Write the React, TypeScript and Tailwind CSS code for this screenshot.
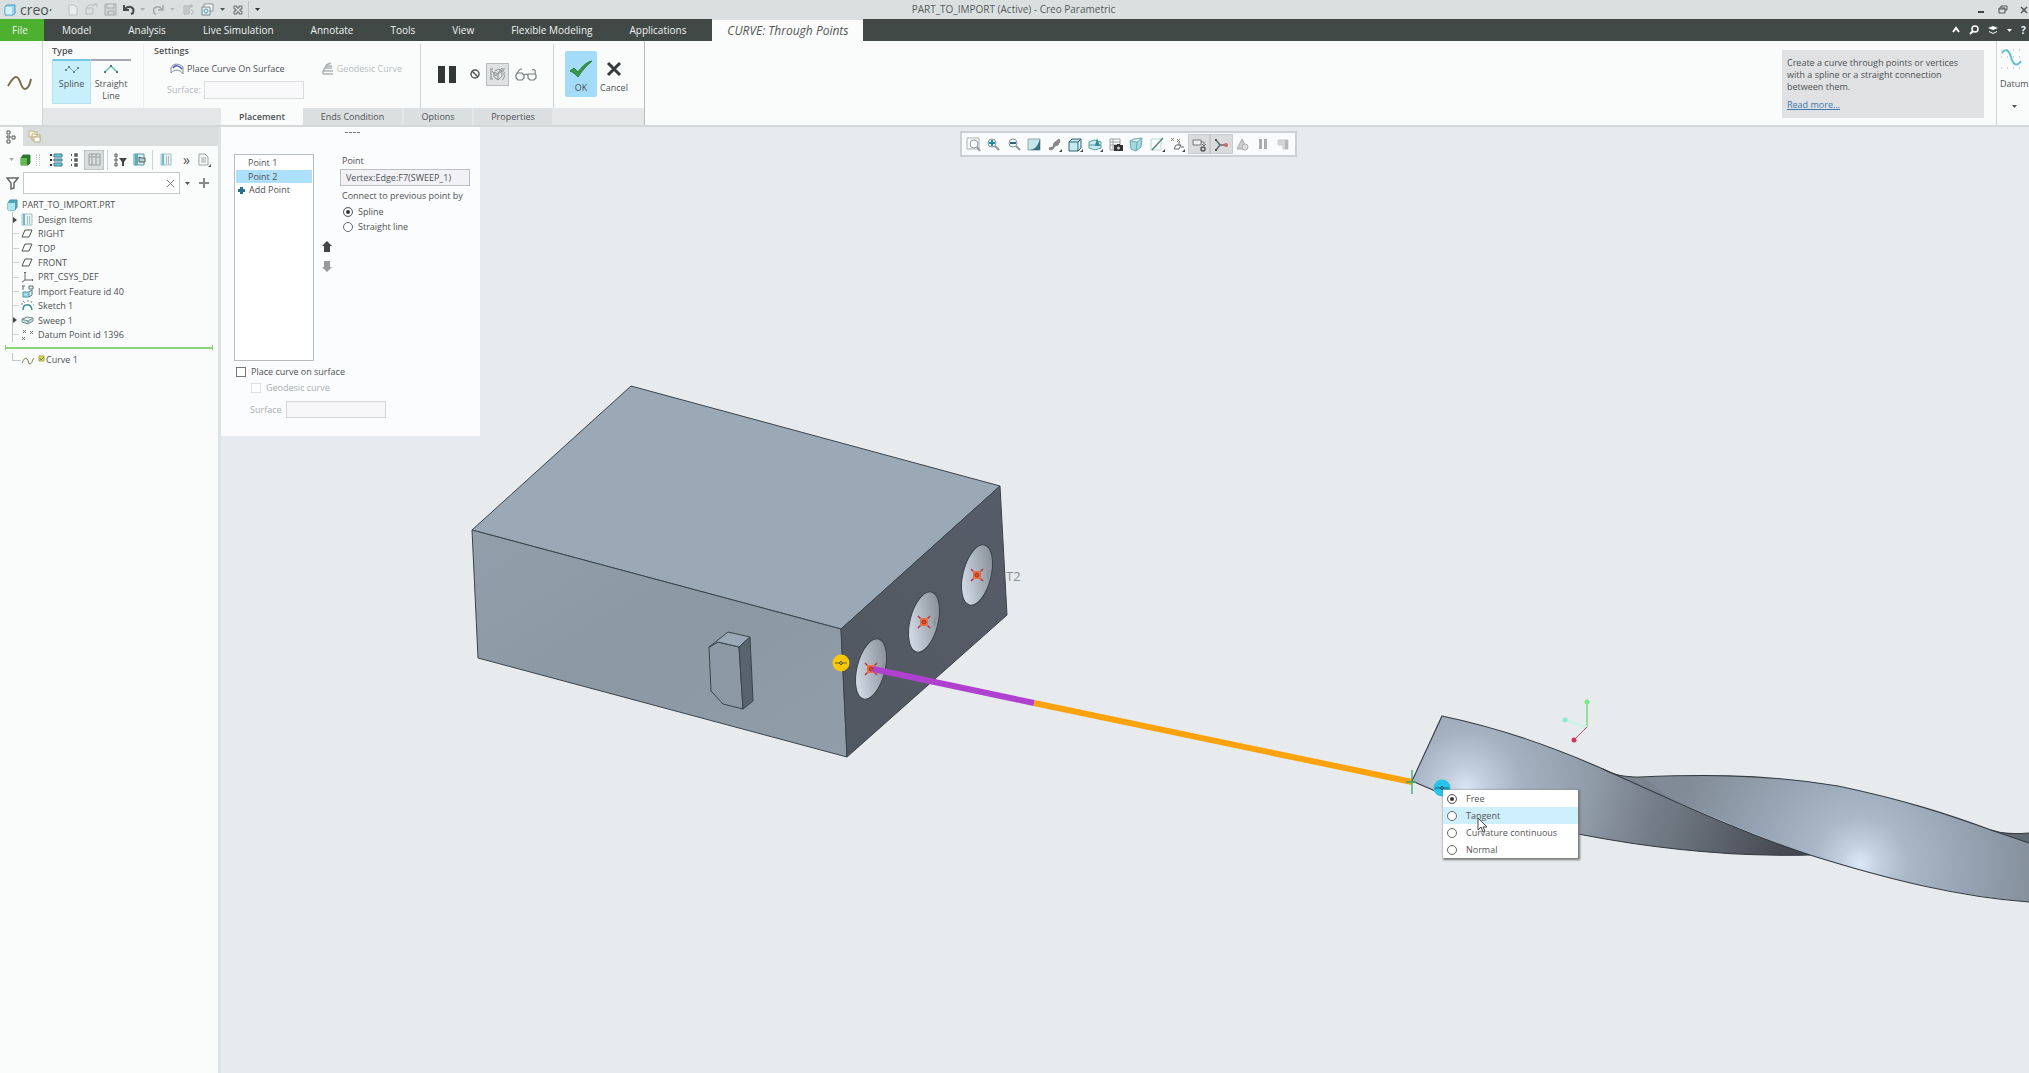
import React from "react";
import type { ReactNode } from "react";

type IconProps = { w?: number; h?: number; box?: string; children: ReactNode };

function Icon({ w = 14, h = 14, box, children }: IconProps) {
  return (
    <svg width={w} height={h} viewBox={box ?? `0 0 ${w} ${h}`} fill="none" stroke="#555" strokeWidth="1" className="shrink-0" aria-hidden="true">
      {children}
    </svg>
  );
}

function Caret({ color = "#555" }: { color?: string }) {
  return (
    <svg width="5" height="3" viewBox="0 0 5 3" className="shrink-0" aria-hidden="true">
      <path d="M0 0h5L2.5 3z" fill={color} />
    </svg>
  );
}

function TitleBar() {
  return (
    <header className="flex h-[19px] shrink-0 items-center bg-[#dae0df] text-[10px] text-[#555b5b]">
      <div className="flex w-[62px] items-center gap-1 pl-1">
        <Icon w={12} h={12}>
          <path d="M1 2.5 3 1h8v8.5L9 11H1z" fill="#9bd7ef" stroke="#3c9cc6" />
          <path d="M1.5 3h6.5v7.5H1.5z" fill="#d8f0f8" stroke="none" />
        </Icon>
        <span className="text-[14px] font-medium leading-4 text-[#4c5254]">creo·</span>
      </div>
      <div className="flex items-center">
        <button aria-label="New" className="ml-1 w-[18px]">
          <Icon w={12} h={12}><path d="M3 1h5l3 2.500V11H3z" fill="#e9eded" stroke="#bcc3c3" /></Icon>
        </button>
        <button aria-label="Open" className="w-5">
          <Icon w={14} h={13}><path d="M2 5h7v6H2zM2 5l3-3h5M9 3l3-2M10 1h3v3" stroke="#b4bbbb" /></Icon>
        </button>
        <button aria-label="Save" className="w-[19px]">
          <Icon w={13} h={13}><path d="M1 1h11v11H1zM3 1v4h7V1M4 12V8h6v4" stroke="#a5acac" fill="#cfd5d5" /></Icon>
        </button>
        <button aria-label="Undo" className="w-[13px]">
          <Icon w={13} h={12}><path d="M2 5c4-4 10-2 8 4l-2 1M1 1v5h5" stroke="#444b4b" strokeWidth="2" /></Icon>
        </button>
        <button aria-label="Undo history" className="flex w-[9px] justify-end"><Caret color="#aab0b0" /></button>
        <button aria-label="Redo" className="ml-[6px] w-[17px]">
          <Icon w={13} h={12}><path d="M11 5C7 1 1 3 3 9l2 1M12 1v5H7" stroke="#a3aaaa" strokeWidth="1.5" /></Icon>
        </button>
        <button aria-label="Redo history" className="flex w-2 justify-center"><Caret color="#b5bbbb" /></button>
        <button aria-label="Regenerate" className="ml-1.5 w-[19px]">
          <Icon w={13} h={13}><path d="M2 3h5v8H2zM3 5h3M3 7h3M3 9h3M9 1v4M7 3h4M9 7c3 0 3 4 0 4" stroke="#aab0b0" /></Icon>
        </button>
        <button aria-label="Windows" className="w-[13px]">
          <Icon w={13} h={13}><path d="M3 1h9v7H3z" fill="#fff" stroke="#888f8f" /><path d="M1 4h8v8H1z" fill="#e3eef0" stroke="#78878a" /><circle cx="5" cy="8" r="2" stroke="#459eb0" /></Icon>
        </button>
        <button aria-label="Window list" className="flex w-[11px] justify-end"><Caret /></button>
        <button aria-label="Close window" className="ml-2 w-[15px]">
          <Icon w={10} h={10}><path d="M1 1h3v2h2V1h3v3H7v2h2v3H6V7H4v2H1V6h2V4H1z" stroke="#666d6d" /></Icon>
        </button>
        <span className="h-[17px] w-px bg-[#bcc3c3]" />
        <button aria-label="Customize toolbar" className="ml-[6px]"><Caret color="#333" /></button>
      </div>
      <h1 className="flex-1 pr-[210px] text-center">PART_TO_IMPORT (Active) - Creo Parametric</h1>
      <div className="flex w-[52px] justify-between pr-px">
        <button aria-label="Minimize"><Icon w={8} h={8}><path d="M1 6h6" stroke="#444" strokeWidth="2" /></Icon></button>
        <button aria-label="Restore"><Icon w={10} h={9}><path d="M3 3V1h6v4H7M1 3h6v5H1zM1 4h6" /></Icon></button>
        <button aria-label="Close"><Icon w={8} h={8}><path d="m1 1 6 6M7 1 1 7" strokeWidth="1.5" /></Icon></button>
      </div>
    </header>
  );
}

const MENUS = ["Model", "Analysis", "Live Simulation", "Annotate", "Tools", "View", "Flexible Modeling", "Applications"];

function MenuBar() {
  return (
    <nav className="flex h-[22px] shrink-0 bg-[#414947] text-[10px] text-[#eef2f1]">
      <button className="w-11 bg-[#4db02f] pr-1">File</button>
      <div className="flex gap-px pr-2">
        {MENUS.map((m) => (
          <button key={m} className="px-[18px]">{m}</button>
        ))}
      </div>
      <button className="w-[151px] border-t border-[#dae0df] bg-[#fafcfc] text-[12px] italic text-[#555]">CURVE: Through Points</button>
      <div className="ml-auto flex items-center gap-[9px] text-[10px]">
        <button aria-label="Collapse ribbon"><Icon w={8} h={8}><path d="m1 6 3-4 3 4" stroke="#fff" strokeWidth="2" /></Icon></button>
        <button aria-label="Search"><Icon w={10} h={10}><circle cx="6" cy="4" r="3" stroke="#fff" strokeWidth="1.5" /><path d="m4 6-3 3" stroke="#fff" strokeWidth="2" /></Icon></button>
        <button aria-label="Learning"><Icon w={10} h={10}><path d="m0 3 5-2 5 2-5 2zM1 6l4 2 4-2v1L5 9 1 7z" fill="#fff" stroke="none" /></Icon></button>
        <button aria-label="More"><Caret color="#fff" /></button>
        <button className="w-2 overflow-hidden text-left font-bold">?</button>
      </div>
    </nav>
  );
}

function Ribbon() {
  return (
    <section className="flex h-[86px] shrink-0 border-b-2 border-[#d5d8d9] bg-[#fafcfc] text-[9px] text-[#4d5153]">
      <div className="flex w-[43px] items-center justify-center border-r border-[#cfd3d4] pr-1">
        <Icon w={25} h={14}>
          <path d="M1 10C4 5 6 1 9 1c5 0 4 12 9 12 3 0 5-5 6-10" stroke="#77704a" strokeWidth="2" />
        </Icon>
      </div>
      <div className="flex flex-col border-r border-[#b9bdbe]">
        <div className="flex h-[67px] pt-[3px]">
          <fieldset className="flex w-[101px] flex-col border-r border-[#eceff0] pl-[9px]">
            <legend className="float-left h-[15px] text-[9px] font-semibold leading-[13px]">Type</legend>
            <div className="flex text-center leading-3">
              <button className="flex h-[45px] w-[39px] flex-col items-center border-x border-b border-t-2 border-[#b6e2f1] border-t-[#78c4e3] bg-[#c8effc] pt-1">
                <Icon w={14} h={9}><path d="m1 5 3-3 5 5 4-4" stroke="#78a8a5" /><path d="M0 4h2v2H0zM3 1h2v2H3zM8 6h2v2H8zM12 2h2v2h-2z" fill="#5e8c8c" stroke="none" /></Icon>
                <span className="mt-1">Spline</span>
              </button>
              <button className="flex h-[45px] w-10 flex-col items-center border-t-2 border-[#a8a8ad] pt-1">
                <Icon w={14} h={9}><path d="m1 7 6-6 6 6" stroke="#65bfb6" strokeWidth="1.5" /><path d="M0 6h2v2H0zM6 0h2v2H6zM12 6h2v2h-2z" fill="#557b79" stroke="none" /></Icon>
                <span className="mt-1">Straight<br />Line</span>
              </button>
            </div>
          </fieldset>
          <fieldset className="w-[276px] pl-[10px]">
            <legend className="h-[18px] text-[9px] font-semibold leading-[13px]">Settings</legend>
            <div className="flex items-center justify-between pl-4 pr-[18px]">
              <button className="flex items-center gap-[3px]">
                <Icon w={14} h={12}><path d="M1 5c2-5 8-5 12-1v7C10 6 4 6 1 10z" stroke="#858b99" /><path d="M3 5c2-3 6-3 9 1" stroke="#4353b8" strokeWidth="1.5" /></Icon>
                Place Curve On Surface
              </button>
              <button disabled className="flex items-center gap-[3px] text-[#b9bdbf]">
                <Icon w={13} h={13}><path d="M2 12h10M2 9h10M3 6h8M5 3l5-2M2 9l3-5h6M2 12V9" stroke="#aeb1b3" strokeWidth="1.5" /></Icon>
                Geodesic Curve
              </button>
            </div>
            <label className="mt-[5px] flex items-center gap-[3px] pl-[13px] text-[#b5b9bb]">
              Surface:
              <input disabled className="h-[18px] w-[100px] border border-[#dcdcdf] bg-[#f9f9fb]" />
            </label>
          </fieldset>
          <div className="flex w-[133px] items-center border-l border-[#cfd3d4] pb-1 pl-[17px]">
            <button aria-label="Pause"><Icon w={18} h={17}><path d="M0 0h7v17H0zM11 0h7v17h-7z" fill="#333738" stroke="none" /></Icon></button>
            <button aria-label="No preview" className="ml-[14px]"><Icon w={10} h={10}><circle cx="5" cy="5" r="4" strokeWidth="1.5" /><path d="m2 2 6 6" strokeWidth="1.5" /></Icon></button>
            <button aria-label="Attached preview" className="ml-[6px] flex size-[23px] items-center justify-center border border-[#b9bcbd] bg-[#dfe1e2]">
              <Icon w={17} h={15}><path d="M1 2h3M2 2v10M1 12h3M16 2h-3M14 2v3M13 13c2 0 1-3 3-4-2-1-1-3 0-4M6 4l4-2 3 2v5l-4 4-4-3V5l4 2 4-3M9 7v5M3 4l4 5 6-8" stroke="#8d9192" /></Icon>
            </button>
            <button aria-label="Glasses preview" className="ml-[6px]">
              <Icon w={22} h={15}><path d="M2 6h5l2 2v3l-2 2H3l-2-2V8zM13 7h7l1 1v3l-2 2h-4l-2-2zM9 8c1-1 3-1 4 0M2 7c1-3 3-5 5-5M20 7c1-3 0-5-3-4" stroke="#777b7d" strokeWidth="1.2" /></Icon>
            </button>
          </div>
          <div className="flex w-[91px] border-l border-[#cfd3d4] pl-[11px] pt-[7px]">
            <button className="flex h-[46px] w-8 flex-col items-center justify-end rounded-xs bg-[#a3dcf9] pb-[3px]">
              <Icon w={24} h={18}><path d="m1 11 4-3 4 4C12 8 17 2 23 1 17 6 12 12 9 17 7 15 4 12 1 11z" fill="#379b46" stroke="#2b7c3d" /></Icon>
              <span className="mt-1 leading-3">OK</span>
            </button>
            <button className="flex h-[46px] w-[34px] flex-col items-center justify-end pb-[3px]">
              <Icon w={16} h={16}><path d="m2 2 12 12M14 2 2 14" stroke="#373b3c" strokeWidth="3" /></Icon>
              <span className="mt-[5px] leading-3">Cancel</span>
            </button>
          </div>
        </div>
        <div role="tablist" className="flex flex-1 gap-0.5 bg-[#e4e6e7]">
          <button role="tab" aria-selected="true" className="ml-[178px] w-[82px] bg-[#fafcfc] font-semibold">Placement</button>
          <button role="tab" aria-selected="false" className="-ml-0.5 w-[99px] bg-[#dcdfe0]">Ends Condition</button>
          <button role="tab" aria-selected="false" className="w-[68px] bg-[#dcdfe0]">Options</button>
          <button role="tab" aria-selected="false" className="w-[78px] bg-[#dcdfe0]">Properties</button>
        </div>
      </div>
      <aside className="ml-auto mr-3 mt-[9px] h-[68px] w-[202px] bg-[#dfe1e2] px-[5px] pt-[7px] leading-3">
        <p>Create a curve through points or vertices<br />with a spline or a straight connection<br />between them.</p>
        <a href="#more" className="mt-[6px] block text-[#3d7bb0] underline">Read more...</a>
      </aside>
      <button className="flex w-[33px] flex-col items-start border-l border-[#cfd3d4] pl-[3px] pt-[6px]">
        <Icon w={24} h={24}>
          <path d="M2 6C5 1 9 3 11 10c2 8 6 10 10 4" stroke="#66bfd0" strokeWidth="2" />
          <path d="M1 3h21M1 21h21M1 10h21" stroke="#aab" strokeDasharray="1 5" />
        </Icon>
        <span className="mt-[6px]">Datum</span>
        <span className="mt-[14px] pl-3"><Caret /></span>
      </button>
    </section>
  );
}

const ModelTreeIcon = (
  <Icon w={10} h={14}><path d="M1 1h3v3H1zM1 6h3v2H1zM1 10h3v3H1zM6 6h3v3H6z" stroke="#555" /></Icon>
);

const Part = <Icon w={11} h={12}><path d="m1 4 2-3h7v7l-2 3H1z" fill="#4ea6bc" stroke="#4592a5" /><path d="M1 4h7v7H1z" fill="#aee6ee" stroke="none" /></Icon>;
const Plane = <Icon w={12} h={10}><path d="M4 1h7L8 8H1z" stroke="#555" /></Icon>;
const Items = <Icon w={12} h={13}><path d="M1 1h10v11H1z" stroke="#a7c0c5" fill="#e9f2f3" /><path d="M2 1h2v11H2z" fill="#6bb8c8" stroke="none" /><path d="M6 4h4M6 6h4M6 8h4M6 10h4" stroke="#75868b" strokeDasharray="1 1" /></Icon>;
const Csys = <Icon w={13} h={12}><path d="M4 1v8h8M4 9l-3 2M3 2l1-1 1 1M11 8l1 1-1 1" stroke="#666" /></Icon>;
const Import = <Icon w={13} h={13}><path d="M2 7h6v5H2z" fill="#9bdbea" stroke="#4e96a8" /><path d="M8 1h4v3H8zM1 1h3M2 1v4M8 7l3-2v5l-3 2" stroke="#566e75" /></Icon>;
const Sketch = <Icon w={13} h={11}><path d="M2 10C2 3 10 3 11 10" stroke="#418d9c" strokeWidth="1.5" /><path d="M0 4h2M2 1l2 2M7 0v2M11 1l-1 2M12 5h1" stroke="#7d8f94" /></Icon>;
const Sweep = <Icon w={13} h={9}><path d="m1 3 5-2 6 1v3L7 8 1 6zM1 3l6 2 5-3M7 5v3" fill="#b6dcda" stroke="#79918f" /></Icon>;
const Points = <Icon w={13} h={12}><path d="m2 1 3 3M5 1 2 4M9 2l3 3M12 2 9 5M1 8l3 3M4 8l-3 3" stroke="#776f66" /></Icon>;

const TREE: { label: string; icon: ReactNode; arrow?: boolean }[] = [
  { label: "Design Items", icon: Items, arrow: true },
  { label: "RIGHT", icon: Plane },
  { label: "TOP", icon: Plane },
  { label: "FRONT", icon: Plane },
  { label: "PRT_CSYS_DEF", icon: Csys },
  { label: "Import Feature id 40", icon: Import },
  { label: "Sketch 1", icon: Sketch },
  { label: "Sweep 1", icon: Sweep, arrow: true },
  { label: "Datum Point id 1396", icon: Points },
];

function ModelTree() {
  return (
    <aside className="w-[221px] shrink-0 border-r-[3px] border-[#dde2e3] bg-[#fafcfc] text-[9px] text-[#4d5153]">
      <div className="flex h-[19px] bg-[#d9dddd]">
        <button aria-label="Model tree" className="flex w-[23px] items-center bg-[#fafcfc] pl-[6px]">{ModelTreeIcon}</button>
        <button aria-label="Folders" className="flex w-6 items-center justify-center">
          <Icon w={14} h={13}><path d="M1 1h4l1 1h3v5H1zM4 4h4l1 1h3v5H4z" fill="#fbf8e6" stroke="#bcae7c" /><path d="M6 7h6v5H6z" fill="#fff" stroke="#bcae7c" /></Icon>
        </button>
      </div>
      <div className="flex h-[27px] items-center">
        <span className="ml-[9px]"><Caret color="#a7aaaa" /></span>
        <button aria-label="Model" className="ml-[6px]"><Icon w={11} h={12}><path d="m1 4 2-3h7v8l-2 2H1z" fill="#2c7330" stroke="#377d38" /><path d="M1 4h6v7H1z" fill="#65ba4c" stroke="none" /></Icon></button>
        <span className="ml-[5px] h-3 w-1 border-x border-dotted border-[#c3c6c6]" />
        <button aria-label="Tree list" className="ml-[10px]"><Icon w={13} h={14}><path d="M4 1h8v3H4zM4 6h8v2H4zM4 10h8v3H4z" fill="#70c7dc" stroke="#407d90" /><path d="M0 2h2M0 7h2M0 12h2" stroke="#333" strokeWidth="2" /></Icon></button>
        <button aria-label="Detail list" className="ml-[7px]"><Icon w={9} h={14}><path d="M5 1h2v2H5zM5 6h2v2H5zM5 11h2v2H5z" stroke="#555" strokeWidth="1.5" /><path d="M1 2h1M1 7h1M1 12h1" stroke="#555" strokeWidth="2" /></Icon></button>
        <button aria-label="Columns" className="ml-[5px] flex size-5 items-center justify-center border border-[#bec3c3] bg-[#dadddd]">
          <Icon w={13} h={13}><path d="M1 1h11v11H1zM4 1v11M8 1v11M1 4h11" stroke="#9aa0a0" /></Icon>
        </button>
        <span className="ml-[3px] h-5 w-px bg-[#d0d4d4]" />
        <button aria-label="Tree filters" className="ml-[6px]"><Icon w={13} h={14}><path d="M1 1h2v3H1zM1 6h2v2H1zM1 10h2v3H1z" /><path d="M5 5h8l-3 4v4H8V9z" fill="#444" stroke="none" /></Icon></button>
        <button aria-label="Tree columns" className="ml-[6px]"><Icon w={13} h={13}><path d="M1 1h10v11H1z" fill="#d9f0f2" stroke="#549aa5" /><path d="M2 1h3v11H2z" fill="#5babbb" stroke="none" /><path d="M6 4v5h6V5H8z" fill="#b1d4d6" /></Icon></button>
        <span className="ml-[6px] h-5 w-px bg-[#d0d4d4]" />
        <button aria-label="Design items" className="ml-[7px]">{Items}</button>
        <button aria-label="More commands" className="ml-[11px] text-[14px] leading-4">»</button>
        <button aria-label="Report" className="ml-[8px]"><Icon w={13} h={14}><path d="M1 1h6l3 3v8H1zM3 5h5M3 7h5M3 9h5" stroke="#9da2a2" /><path d="M13 11v3h-3z" fill="#555" stroke="none" /></Icon></button>
      </div>
      <div className="flex h-[20px] items-center">
        <button aria-label="Filter" className="ml-[6px] w-[17px]"><Icon w={13} h={13}><path d="M1 1h11L8 6v5l-3 1V6z" stroke="#666" strokeWidth="1.5" /></Icon></button>
        <div className="flex h-[22px] w-[157px] items-center border border-[#c5c9ca] bg-white pr-[5px]">
          <input aria-label="Search tree" className="min-w-0 flex-1 px-1 outline-none" />
          <button aria-label="Clear"><Icon w={7} h={7}><path d="m0 0 7 7M7 0 0 7" stroke="#777" /></Icon></button>
        </div>
        <button aria-label="Search options" className="ml-[5px]"><Caret /></button>
        <button aria-label="Add filter" className="ml-[9px]"><Icon w={10} h={10}><path d="M5 0v10M0 5h10" stroke="#888" strokeWidth="2" /></Icon></button>
      </div>
      <ul className="mt-[5px] grid h-36 auto-rows-fr">
        <li className="flex items-center gap-[4px] pl-[7px]">{Part}PART_TO_IMPORT.PRT</li>
        {TREE.map((t) => (
          <li key={t.label} className="flex items-center">
            <span className="ml-[12px] flex h-full w-[9px] items-center border-l border-[#c5c8c8]">
              {t.arrow ? (
                <Icon w={4} h={6}><path d="M0 0v6l4-3z" fill="#444" stroke="none" /></Icon>
              ) : (
                <span className="h-px w-[6px] bg-[#d0d3d3]" />
              )}
            </span>
            <span className="flex w-[17px] items-center">{t.icon}</span>
            {t.label}
          </li>
        ))}
      </ul>
      <div className="mx-[5px] mt-[3px] flex h-[5px] items-center border-x border-[#7ccb6a]"><span className="h-[2px] w-full bg-[#8bd67a]" /></div>
      <div className="mt-[3px] flex h-[14px] items-center">
        <span className="mb-[6px] ml-[12px] h-2 w-[9px] border-b border-l border-[#c5c8c8]" />
        <Icon w={13} h={9}><path d="M1 7c2-4 3-6 5-4s1 5 3 5 2-4 4-6" stroke="#77704a" /></Icon>
        <Icon w={12} h={10}><path d="M5 1h5v5H5z" fill="#e6e04c" stroke="#aaa544" /><path d="m6 3 1 2 3-3" stroke="#5a8e31" /></Icon>
        Curve 1
      </div>
    </aside>
  );
}

const RADIO =
  "size-[10px] shrink-0 appearance-none rounded-full border border-[#666] bg-white checked:bg-[#333] checked:shadow-[inset_0_0_0_2px_white]";
const CHECK = "size-[10px] shrink-0 appearance-none border border-[#777] bg-white disabled:border-[#dedfe0]";

function PlacementPanel() {
  return (
    <section className="absolute left-0 top-0 h-[309px] w-[259px] bg-[#fbfcfd] pl-[13px] pr-[10px] text-[9px] text-[#4d5153]">
      <div className="flex h-[27px] justify-center pt-[5px]">
        <span className="h-px w-[15px] border-t border-dashed border-[#777]" />
      </div>
      <div className="flex">
        <ul className="h-[207px] w-[80px] border border-[#b9bdbf] bg-white px-px pt-px leading-[14px]">
          <li className="pl-3">Point 1</li>
          <li className="bg-[#ade0fa] pl-3 leading-[13px]">Point 2</li>
          <li>
            <button className="flex items-center gap-1 pl-[2px]">
              <Icon w={7} h={7}><path d="M3.500 0v7M0 3.500h7" stroke="#27718a" strokeWidth="3" /></Icon>
              Add Point
            </button>
          </li>
        </ul>
        <div className="flex w-[26px] flex-col items-center gap-[9px] pt-[87px]">
          <button aria-label="Move up"><Icon w={10} h={11}><path d="m5 0 5 5H8v6H2V5H0z" fill="#444" stroke="none" /></Icon></button>
          <button aria-label="Move down"><Icon w={10} h={11}><path d="m5 11 5-5H8V0H2v6H0z" fill="#999" stroke="none" /></Icon></button>
        </div>
        <div className="flex flex-1 flex-col">
          <label htmlFor="pt" className="pl-0.5 leading-[14px]">Point</label>
          <input id="pt" readOnly value="Vertex:Edge:F7(SWEEP_1)" className="mt-px h-[17px] border border-[#bdbdc6] bg-[#f2f1f6] px-[5px]" />
          <fieldset>
            <legend className="pl-0.5 pt-[3px] leading-[14px]">Connect to previous point by</legend>
            <label className="mt-px flex h-[15px] items-center gap-[5px] pl-[3px]"><input type="radio" name="connect" defaultChecked className={RADIO} />Spline</label>
            <label className="flex h-[15px] items-center gap-[5px] pl-[3px]"><input type="radio" name="connect" className={RADIO} />Straight line</label>
          </fieldset>
        </div>
      </div>
      <label className="mt-1 flex h-[14px] items-center gap-[5px] pl-[2px]"><input type="checkbox" className={CHECK} />Place curve on surface</label>
      <label className="mt-[2px] flex h-[14px] items-center gap-[5px] pl-[17px] text-[#a9adb0]"><input type="checkbox" disabled className={CHECK} />Geodesic curve</label>
      <label className="mt-[6px] flex items-center gap-1 pl-4 text-[#a9adb0]">Surface<input disabled className="h-[17px] w-[100px] border border-[#d3d3da] bg-[#f7f7fa]" /></label>
    </section>
  );
}

const lens = <><circle cx="6" cy="6" r="4" fill="#eef8fa" stroke="#84979d" /><path d="m9 9 4 4" stroke="#8b999d" strokeWidth="2" /></>;
const corner = <path d="M15 12v3h-3z" fill="#444" stroke="none" />;

const VIEW_TOOLS: { name: string; on?: boolean; art: ReactNode }[] = [
  { name: "Refit", art: <><path d="M1 1h12v11H1z" stroke="#aab1b3" /><circle cx="8" cy="7" r="4" fill="#fff" stroke="#8d999b" /><path d="m11 10 3 4" stroke="#8d999b" strokeWidth="2" /></> },
  { name: "Zoom in", art: <>{lens}<path d="M6 3v6M3 6h6" stroke="#2288a4" strokeWidth="2" /></> },
  { name: "Zoom out", art: <>{lens}<path d="M3 6h6" stroke="#2f6272" strokeWidth="2" /></> },
  { name: "Repaint", art: <><path d="M1 2h12v11H1z" fill="#c5e5ea" stroke="#8daab0" /><path d="M13 2v11H3c6-1 8-5 10-11z" fill="#376f7d" stroke="none" /></> },
  { name: "Rendering options", art: <><path d="m2 11 4-1 1-4 5-4 1 2-2 4-3 1-2 3-3 1z" fill="#888" stroke="#888" />{corner}</> },
  { name: "Display style", art: <><path d="M1 5h9v9H1zM1 5l3-3h9l-3 3M13 2v9l-3 3" fill="#c5e9ef" stroke="#2e6575" />{corner}</> },
  { name: "Saved orientations", art: <><path d="m1 5 5-2 7 2v6l-6 2-6-2zM1 8h12" fill="#c5e9ef" stroke="#5aa0af" /><path d="m9 1 3 8H7z" fill="#39879a" stroke="none" />{corner}</> },
  { name: "View manager", art: <><path d="M1 2h10v11H1zM1 5h10M4 2v11M1 8h10" stroke="#9a9fa1" /><path d="M5 8h9v6H5zM8 7h3v2H8z" fill="#333" stroke="none" /><circle cx="9.500" cy="11" r="1.500" fill="#ccc" stroke="none" /></> },
  { name: "Perspective view", art: <path d="m1 4 4-2 8-1-1 9-5 4-5-2zM1 4l7 1 5-4M8 5l-1 9" fill="#a3dae2" stroke="#6aabb5" /> },
  { name: "Section", art: <><path d="M1 2h10v11H1z" stroke="#bcd8d9" /><path d="M13 1 2 13" stroke="#5b8585" strokeWidth="1.5" />{corner}</> },
  { name: "Datum display filters", art: <><path d="m1 1 3 3M4 1 1 4M7 2l3 3M10 2 7 5" stroke="#877b70" /><path d="M4 12h5l2-4H6zM9 8V5M11 10h3" stroke="#666" />{corner}</> },
  { name: "Annotation display", on: true, art: <><path d="M1 3h8v5H1zM9 5h3v3M10 7l2 2 2-2" fill="#eee" stroke="#777" /><circle cx="11" cy="12" r="2" strokeWidth="1.500" /></> },
  { name: "Spin center", on: true, art: <><path d="M2 3l4 5-4 5M6 8h6" stroke="#666" strokeWidth="1.5" /><path d="M1 2h2v2H1zM1 12h2v2H1z" fill="#555" stroke="none" /><circle cx="12" cy="8" r="2" fill="#cc6a70" stroke="none" /></> },
  { name: "Simulate", art: <><path d="M7 2 2 12h10z" fill="#ccc" stroke="#aaa" /><circle cx="10" cy="10" r="3" fill="#ddd" stroke="#aaa" /></> },
  { name: "Pause simulation", art: <path d="M3 2h3v10H3zM8 2h3v10H8z" fill="#a9acae" stroke="none" /> },
  { name: "Simulation results", art: <><path d="M2 3h10v9H7V8H2z" fill="#d3d5d6" stroke="#ccc" /><path d="M9 3h3v9H9z" fill="#b5b7b8" stroke="none" /></> },
];

function ViewToolbar() {
  return (
    <div role="toolbar" className="absolute left-[739px] top-[4px] flex h-[26px] w-[337px] items-center border-2 border-[#cdd0d2] bg-[#fafbfc] px-px">
      {VIEW_TOOLS.map((t) => (
        <button key={t.name} aria-label={t.name} className={t.on ? "flex h-[20px] flex-1 items-center justify-center border border-[#c8cbcd] bg-[#d9dbdd]" : "flex h-[20px] flex-1 items-center justify-center"}>
          <Icon w={15} h={15}>{t.art}</Icon>
        </button>
      ))}
    </div>
  );
}

const HOLES = [
  { x: 871, y: 669 },
  { x: 924, y: 622 },
  { x: 977, y: 575 },
];

function Scene() {
  return (
    <svg viewBox="221 127 1808 946" preserveAspectRatio="xMinYMin slice" className="absolute inset-0 h-full w-full" role="img" aria-label="3D model">
      <defs>
        <linearGradient id="hole" x1="1" y1="0" x2="0" y2="1">
          <stop offset="0" stopColor="#7b828b" />
          <stop offset="0.4" stopColor="#a3abb5" />
          <stop offset="0.8" stopColor="#cfd7e3" />
          <stop offset="1" stopColor="#b9c2ce" />
        </linearGradient>
        <linearGradient id="front" x1="0" y1="0" x2="1" y2="1">
          <stop offset="0" stopColor="#929fab" />
          <stop offset="0.5" stopColor="#8c98a2" />
          <stop offset="1" stopColor="#919da8" />
        </linearGradient>
        <linearGradient id="side" x1="0" y1="1" x2="1" y2="0">
          <stop offset="0" stopColor="#505861" />
          <stop offset="1" stopColor="#575d68" />
        </linearGradient>
        <radialGradient id="s1" gradientUnits="userSpaceOnUse" cx="1466" cy="788" r="190">
          <stop offset="0" stopColor="#dbe6f5" />
          <stop offset="0.1" stopColor="#c3cfde" />
          <stop offset="0.3" stopColor="#a5b1c0" />
          <stop offset="0.65" stopColor="#919ca9" />
          <stop offset="1" stopColor="#7b848e" />
        </radialGradient>
        <linearGradient id="s2" gradientUnits="userSpaceOnUse" x1="1590" y1="800" x2="1780" y2="860">
          <stop offset="0" stopColor="#808a95" stopOpacity="0" />
          <stop offset="0.5" stopColor="#69717b" />
          <stop offset="1" stopColor="#454951" />
        </linearGradient>
        <radialGradient id="s3" gradientUnits="userSpaceOnUse" cx="1860" cy="864" r="190">
          <stop offset="0" stopColor="#dde9f8" />
          <stop offset="0.1" stopColor="#c3d0e0" />
          <stop offset="0.25" stopColor="#aab7c7" />
          <stop offset="0.55" stopColor="#98a4b3" />
          <stop offset="1" stopColor="#818b97" />
        </radialGradient>
      </defs>
      <g stroke="#3a444b" strokeWidth="1" strokeLinejoin="round">
        <path d="M631 386 1000 486 841 629 472 530z" fill="#9ba8b5" />
        <path d="M472 530 841 629 847 757 478 658z" fill="url(#front)" />
        <path d="M841 629 1000 486 1007 615 847 757z" fill="url(#side)" />
        <path d="m709 647 9-5 21 5 4 62-20-5-12-13z" fill="#8c98a3" />
        <path d="m709 647 19-15 22 5-11 10-21-5z" fill="#9ba8b5" />
        <path d="m739 647 11-10 3 64-10 8z" fill="#59636e" />
      </g>
      <text x="1006" y="581" fontSize="13" fill="#8b9096">T2</text>
      {HOLES.map((h) => (
        <g key={h.x} transform={`translate(${h.x} ${h.y})`}>
          <ellipse rx="14" ry="31" transform="rotate(14)" fill="url(#hole)" stroke="#3a444b" />
          <path d="M11-4v8M11-4h3" stroke="#858c95" />
          <path d="M-6-6 6 6M6-6-6 6" stroke="#b33a50" strokeWidth="1.5" />
          <path d="M-4-4h8v8h-8z" fill="#e87045" />
          <circle r="2" fill="#d0502f" stroke="#a5342c" />
        </g>
      ))}
      <g strokeWidth="6" fill="none">
        <path d="m1034 703 378 79" stroke="#fba20d" />
        <path d="m873 669 161 34" stroke="#b040cf" />
      </g>
      <circle cx="841" cy="663" r="8.500" fill="#f7c709" />
      <path d="M835 663h12M841 661l2 2-2 2-2-2z" stroke="#6e6426" fill="#f7c709" />

      <path d="M1603 769C1615 775 1622 777 1640 777 1690 775 1760 773 1838 786 1905 800 1950 815 1991 830L2029 843V902C1960 896 1890 880 1810 855 1740 830 1660 795 1603 769z" fill="url(#s3)" />
      <path d="M1603 769c12 6 20 8 40 8l30 24z" fill="#7b848e" />
      <path d="M1442 716C1500 728 1560 750 1603 769 1660 795 1740 832 1810 855 1730 857 1650 848 1578 834 1520 822 1460 803 1412 781z" fill="url(#s1)" />
      <path d="M1603 769C1660 795 1740 832 1810 855 1730 857 1650 848 1578 834z" fill="url(#s2)" />
      <path d="M1991 830c12 4 22 4 38 3v10z" fill="#606871" />
      <g fill="none" stroke="#333b43" strokeWidth="1.1">
        <path d="M1412 781 1442 716C1500 728 1560 750 1603 769 1660 795 1740 832 1810 855 1890 880 1960 897 2029 902" />
        <path d="M1412 781C1460 803 1520 822 1578 834 1650 848 1730 857 1810 855" />
        <path d="M1603 769C1615 775 1622 777 1640 777 1690 775 1760 773 1838 786 1905 800 1950 815 1991 830L2029 843" />
        <path d="M1991 830c12 4 22 4 38 3" />
      </g>
      <path d="M1412 770v24M1406 782h10" stroke="#38a673" strokeWidth="1.3" />
      <circle cx="1442" cy="788" r="8.500" fill="#27c3e9" />
      <path d="M1435 788h14M1442 786l2 2-2 2-2-2z" stroke="#225c70" fill="#27c3e9" />
      <path d="M1587 703v24" stroke="#75df80" strokeWidth="1.5" />
      <path d="m1587 727-23-7" stroke="#c9f3e3" strokeWidth="2" />
      <path d="m1587 727-13 13" stroke="#bd5a6c" />
      <circle cx="1587" cy="702" r="2.500" fill="#7cea84" />
      <circle cx="1565" cy="720" r="2.500" fill="#7fefd0" />
      <circle cx="1574" cy="740" r="2.500" fill="#d23455" />
    </svg>
  );
}

const CONDITIONS = ["Free", "Tangent", "Curvature continuous", "Normal"];

function ConditionMenu() {
  return (
    <div className="absolute left-[1222px] top-[663px] w-[135px] bg-white text-[9px] text-[#555] shadow-[1px_1px_2px_1px_#777]">
      {CONDITIONS.map((c, i) => (
        <label key={c} className={i === 1 ? "flex h-[17px] items-center gap-[9px] bg-[#cdf0fc] pl-1" : "flex h-[17px] items-center gap-[9px] pl-1"}>
          <input type="radio" name="condition" defaultChecked={i === 0} className={RADIO} />
          {c}
        </label>
      ))}
      <svg width="11" height="17" viewBox="0 0 11 17" className="absolute left-[34px] top-[27px]" aria-hidden="true">
        <path d="M1 1v12l3-3 2 5 2-1-2-4h4z" fill="#fff" stroke="#444" />
      </svg>
    </div>
  );
}

export default function App() {
  return (
    <div className="flex min-h-screen w-full flex-col overflow-hidden bg-[#e8ebed] font-['Open_Sans','Noto_Sans',sans-serif]">
      <TitleBar />
      <MenuBar />
      <Ribbon />
      <div className="flex flex-1">
        <ModelTree />
        <main className="relative flex-1 overflow-hidden">
          <Scene />
          <PlacementPanel />
          <ViewToolbar />
          <ConditionMenu />
        </main>
      </div>
    </div>
  );
}
